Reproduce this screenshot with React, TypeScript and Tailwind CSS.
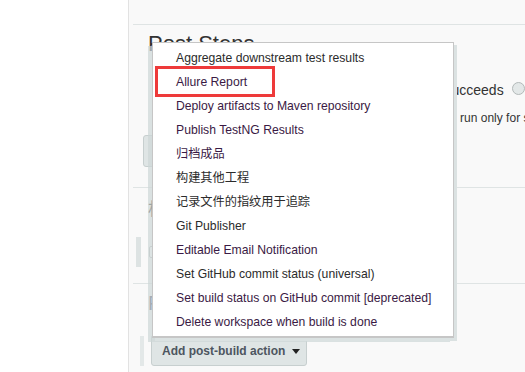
import React from "react";

// 下拉菜单条目（visited 的条目颜色偏紫）
const MENU_ITEMS: { label: string; visited?: boolean }[] = [
  { label: "Aggregate downstream test results" },
  { label: "Allure Report", visited: true },
  { label: "Deploy artifacts to Maven repository", visited: true },
  { label: "Publish TestNG Results", visited: true },
  { label: "归档成品", visited: true },
  { label: "构建其他工程" },
  { label: "记录文件的指纹用于追踪" },
  { label: "Git Publisher" },
  { label: "Editable Email Notification", visited: true },
  { label: "Set GitHub commit status (universal)" },
  { label: "Set build status on GitHub commit [deprecated]", visited: true },
  { label: "Delete workspace when build is done", visited: true },
];

function Radio() {
  return <span className="inline-block h-[13px] w-[13px] shrink-0 rounded-full border border-[#b3b9b9] bg-[#e3e8e8]" />;
}

function Divider() {
  return <div className="ml-[4px] h-px bg-[#dfe4e4]" />;
}

export default function App() {
  return (
    <div className="relative flex h-[372px] w-[525px] overflow-hidden bg-white font-['Liberation_Sans','Noto_Sans_CJK_SC',sans-serif] text-[#333]">
      {/* 左侧空白栏 */}
      <div className="w-[129px] shrink-0 border-r border-[#e2e2e2] bg-white" />

      {/* 配置表单 */}
      <main className="min-w-0 flex-1 bg-[#f9f9f9]">
        <div className="h-[24px]" />
        <Divider />

        {/* Post Steps */}
        <section className="pl-[19px]">
          <h2 className="mt-[5px] h-[28px] whitespace-nowrap text-[22px] leading-[28px] text-[#333]">Post Steps</h2>
          <div className="mt-[22px] flex h-[20px] items-center whitespace-nowrap text-[14px] leading-[20px]">
            <span className="ml-[174px] inline-block h-[13px] w-[13px] shrink-0 rounded-full border border-[#8a9090] bg-white" />
            <span className="ml-[6px]">Run only if build succeeds</span>
            <span className="ml-[8px]">
              <Radio />
            </span>
            <span className="ml-[6px]">Run only if build succeeds or is unstable</span>
          </div>
          <p className="ml-[164px] mt-[10px] h-[16px] whitespace-nowrap text-[12px] leading-[16px]">
            Should the post-build steps run only for successful builds, etc.
          </p>
          <div className="-ml-[5px] mt-[9px] h-[32px] w-[150px] rounded-[3px] border border-[#c7cfcf] bg-[#dfe5e5]" />
        </section>

        <div className="h-[20px]" />
        <Divider />

        {/* Build Settings */}
        <section className="pl-[19px]">
          <h2 className="mt-[11px] h-[22px] whitespace-nowrap text-[17px] leading-[22px]">构建设置</h2>
          <div className="mt-[16px] flex h-[30px] items-center">
            <div className="-ml-[12px] h-[30px] w-[5px] bg-[#dde3e3]" />
            <span className="ml-[8px] inline-block h-[12px] w-[12px] rounded-[2px] border border-[#b9bcbc] bg-white" />
            <span className="ml-[6px] whitespace-nowrap text-[13px]">E-mail Notification</span>
          </div>
        </section>

        <div className="h-[16px]" />
        <Divider />

        {/* Post-build Actions */}
        <section className="pl-[19px]">
          <h2 className="mt-[6px] h-[26px] whitespace-nowrap text-[20px] leading-[26px] text-[#4a4a6a]">Post-build Actions</h2>
          <div className="mt-[20px] flex items-start">
            <div className="-ml-[8px] h-[30px] w-[4px] bg-[#e3e8e8]" />
            <button className="ml-[7px] flex h-[30px] w-[156px] items-center rounded-b-[3px] border border-[#c7cfcf] bg-[#dfe5e5] pl-[10px] text-[12px] font-bold text-[#4d5560]">
              <span className="whitespace-nowrap">Add post-build action</span>
              <svg className="ml-[7px]" width="8" height="5" viewBox="0 0 8 5">
                <path d="M0 0h8L4 5z" fill="#222" />
              </svg>
            </button>
          </div>
        </section>
      </main>

      {/* 弹出菜单 */}
      <ul className="absolute left-[152px] top-[42px] h-[296px] w-[302px] border border-b-2 border-[#c6c6c6] bg-white pt-[3px] shadow-[3px_3px_0_#dbe2e2,-4px_4px_0_rgba(205,215,215,0.7)]">
        {MENU_ITEMS.map((item) => (
          <li
            key={item.label}
            className={`h-[24px] whitespace-nowrap pl-[23px] text-[12.2px] leading-[24px] ${
              item.visited ? "text-[#3a1a44]" : "text-[#2b2b2b]"
            }`}
          >
            {item.label}
          </li>
        ))}
      </ul>

      {/* 红色标注框 */}
      <div className="absolute left-[155px] top-[66px] h-[31px] w-[120px] border-[3px] border-[#ee3a3a]" />
    </div>
  );
}
